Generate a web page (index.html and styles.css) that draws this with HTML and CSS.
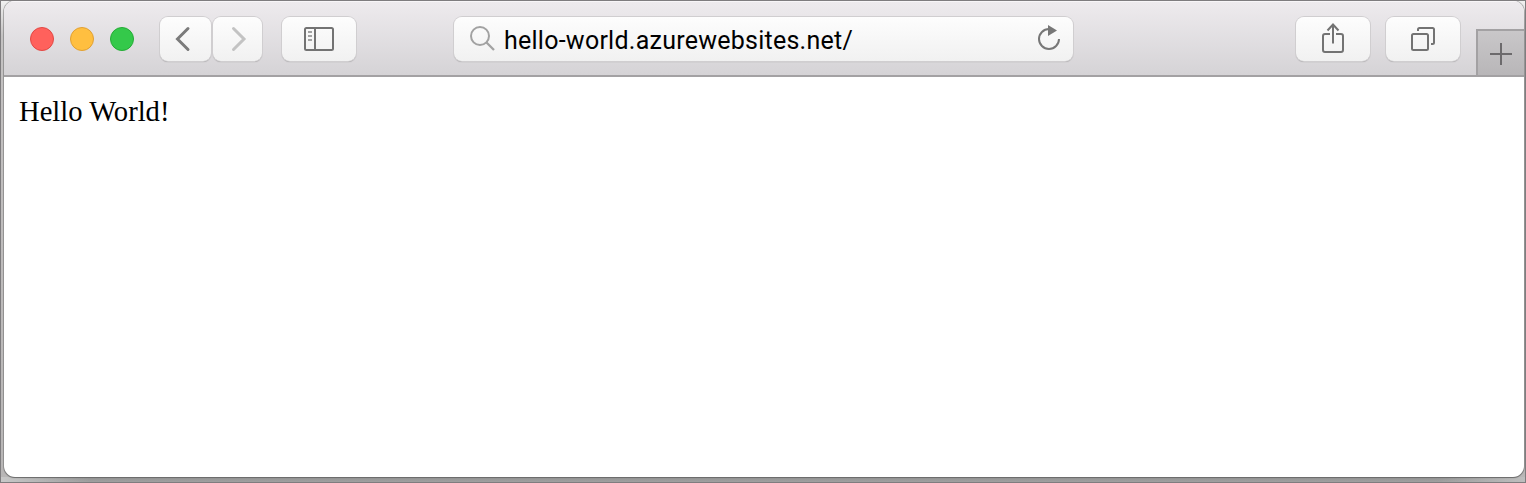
FILE: index.html
```html
<!DOCTYPE html>
<html lang="en">
<head>
<meta charset="utf-8">
<title>hello-world.azurewebsites.net</title>
<link rel="stylesheet" href="styles.css">
</head>
<body>
<div class="desktop">
  <main class="window">
    <header class="toolbar">
      <div class="lights"><i class="light red"></i><i class="light yellow"></i><i class="light green"></i></div>
      <div class="nav">
        <button class="btn back" aria-label="Back"><svg width="51" height="44" viewBox="0 0 51 44"><path d="M28 11.500 17.500 22 28 32.500" fill="none" stroke="#7b7b7b" stroke-width="3" stroke-linecap="round"/></svg></button>
        <button class="btn forward" aria-label="Forward"><svg width="49" height="44" viewBox="0 0 49 44"><path d="M20.500 11.500 31 22 20.500 32.500" fill="none" stroke="#c3c3c3" stroke-width="3" stroke-linecap="round"/></svg></button>
      </div>
      <button class="btn sidebar" aria-label="Sidebar"><svg width="30" height="24" viewBox="0 0 30 24"><rect x="1" y="1" width="28" height="22" rx="1.500" fill="none" stroke="#737373" stroke-width="2"/><path d="M11 1v22" stroke="#737373" stroke-width="2"/><path d="M4 5h4M4 9h4M4 13h4" stroke="#a2a2a2" stroke-width="2"/></svg></button>
      <div class="address">
        <svg width="26" height="26" viewBox="0 0 26 26"><circle cx="10" cy="10" r="9" fill="none" stroke="#a2a2a2" stroke-width="2"/><path d="m16.500 16.500 7.500 7.500" stroke="#a2a2a2" stroke-width="2.300"/></svg>
        <span class="url">hello-world.azurewebsites.net/</span>
        <svg class="reload" width="24" height="28" viewBox="0 0 24 28"><path d="M12 5A10 10 0 1 0 22 15" fill="none" stroke="#777" stroke-width="2"/><path d="m11 1 9 5.500L11 12z" fill="#777"/></svg>
      </div>
      <button class="btn share" aria-label="Share"><svg width="22" height="30" viewBox="0 0 22 30"><path d="M8 11H3q-2 0-2 2v14q0 2 2 2h16q2 0 2-2V13q0-2-2-2h-5M11 20.500V2M5.500 7.500 11 1.500l5.500 6" fill="none" stroke="#737373" stroke-width="2"/></svg></button>
      <button class="btn tabs" aria-label="Tabs"><svg width="24" height="24" viewBox="0 0 24 24"><rect x="1" y="7" width="16" height="16" rx="1.500" fill="none" stroke="#737373" stroke-width="2"/><path d="M7 4V2.500Q7 1 8.500 1h13Q23 1 23 2.500v13q0 1.500-1.500 1.500H20" fill="none" stroke="#737373" stroke-width="2"/></svg></button>
      <button class="new-tab" aria-label="New tab"><svg width="22" height="22" viewBox="0 0 22 22"><path d="M11 0v22M0 11h22" stroke="#6c6a6c" stroke-width="2"/></svg></button>
    </header>
    <section class="page">Hello World!</section>
  </main>
</div>
</body>
</html>
```
FILE: styles.css
```css
* { box-sizing: border-box; }
body { margin: 0; }
svg { display: block; flex: none; }
.desktop {
  width: 1526px;
  height: 483px;
  border: 1px solid #7f7d7f;
  padding: 0 0 5px 3px;
  background:
    linear-gradient(90deg, #c8c8c8, rgba(155, 155, 155, 0) 90px, rgba(155, 155, 155, 0) 1436px, #bebebe) 0 100% / 100% 5px no-repeat,
    linear-gradient(#929292, #a0a0a0) 0 100% / 100% 5px no-repeat,
    linear-gradient(#f1f1f1, #c4c2c2 35px, #b8b6b6);
  overflow: hidden;
}
.window {
  width: 1520px;
  height: 476px;
  display: flex;
  flex-direction: column;
  border-radius: 11px;
  background: #fff;
  overflow: hidden;
  box-shadow: 0 0 0 1px rgba(90, 90, 90, .38), 0 1px 1px #777;
}
.toolbar {
  height: 76px;
  flex: none;
  display: flex;
  align-items: flex-start;
  padding: 16px 0 0 26px;
  background: linear-gradient(#eeebee, #d5d3d6);
  border-bottom: 2px solid #a3a1a3;
  box-shadow: inset 0 1px #f8f6f8;
}
.lights { display: flex; gap: 16px; margin-top: 10px; }
.light { width: 24px; height: 24px; border-radius: 50%; border: 1px solid; }
.red { background: #ff615c; border-color: #e24844; }
.yellow { background: #ffbf40; border-color: #e1a033; }
.green { background: #34c94a; border-color: #25ac36; }
.nav { display: flex; gap: 2px; margin-left: 26px; }
.btn, .address {
  height: 44px;
  padding: 0;
  border: 0;
  border-radius: 8px;
  background: linear-gradient(#fdfdfd, #f1f1f1);
  box-shadow: 0 0 0 1px #d0ced0, 0 1px 1px #8f8d8f;
}
.btn { display: flex; align-items: center; justify-content: center; width: 74px; }
.back { width: 51px; }
.forward { width: 49px; }
.sidebar { margin-left: 20px; }
.address {
  display: flex;
  align-items: flex-start;
  width: 619px;
  margin-left: 98px;
  padding: 9px 12px 0 16px;
}
.url {
  margin: 1px auto 0 8px;
  font: 25px/28px Roboto, sans-serif;
  letter-spacing: .25px;
  white-space: nowrap;
  color: #000;
}
.reload { margin-top: -2px; }
.share { margin-left: 223px; padding-bottom: 2px; }
.tabs { margin-left: 16px; }
.new-tab {
  display: flex;
  align-items: center;
  justify-content: center;
  width: 48px;
  height: 46px;
  margin: 12px 0 0 16px;
  padding: 2px 0 0;
  border: 0 solid #a3a1a3;
  border-width: 2px 0 0 2px;
  background: linear-gradient(#c9c7c9, #b8b6b8);
}
.page {
  flex: 1;
  padding: 19px 15px;
  font: 28.600px/32px "Liberation Serif", serif;
  color: #000;
}
```
